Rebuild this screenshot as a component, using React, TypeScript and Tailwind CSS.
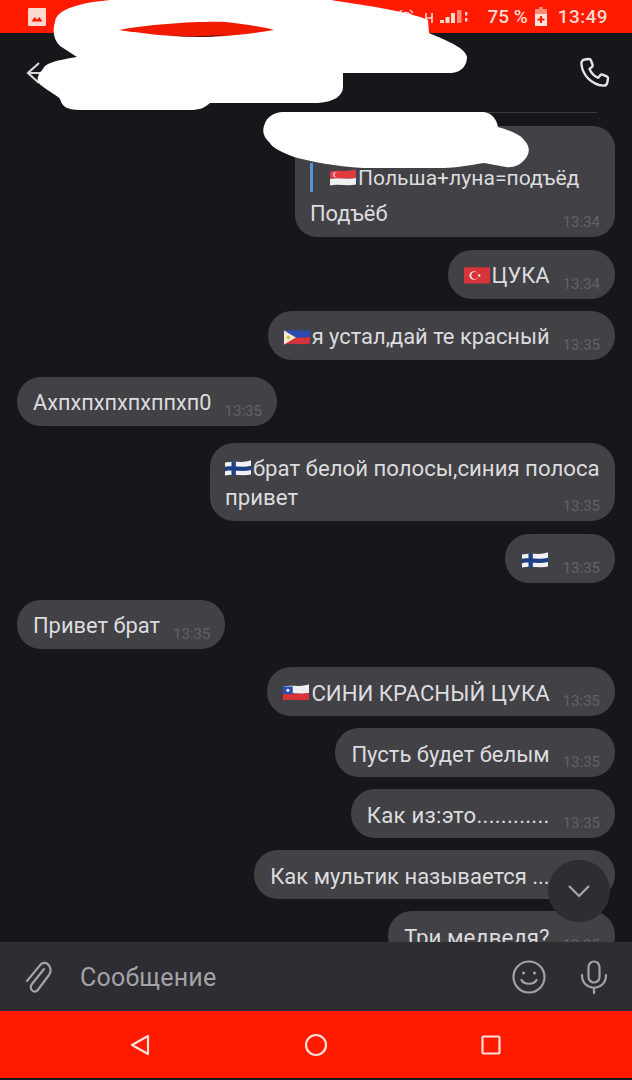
import type { ReactNode } from 'react'

type Msg = {
  text?: string
  flag?: ReactNode
  time: string
  mine?: boolean
  gap?: string
  size?: string
}

function Flag({ children }: { children: ReactNode }) {
  return (
    <svg viewBox="0 0 24 18" className="mr-[2px] inline-block h-[20px] w-[26px] shrink-0 align-[-2px]">
      {children}
    </svg>
  )
}

const Turkey = (
  <Flag>
    <rect x="0" y="1" width="24" height="15" fill="#d8333a" />
    <circle cx="9" cy="8.5" r="4" fill="#f4e3e3" />
    <circle cx="10" cy="8.5" r="3.2" fill="#d8333a" />
    <circle cx="14" cy="8.5" r="1.2" fill="#f4e3e3" />
  </Flag>
)

const Philippines = (
  <Flag>
    <path d="M0 3 C8 1 16 5 24 2 V9 C16 11 8 8 0 10 Z" fill="#2b4bb0" />
    <path d="M0 10 C8 8 16 11 24 9 V15 C16 17 8 14 0 16 Z" fill="#d8333a" />
    <path d="M0 3 L11 9.5 L0 16 Z" fill="#efe9d2" />
    <circle cx="4" cy="9.5" r="1.6" fill="#e0b93a" />
  </Flag>
)

const Finland = (
  <Flag>
    <path d="M0 3 C8 1 16 4 24 1 V14 C16 16 8 13 0 15 Z" fill="#f1f1f1" />
    <path d="M0 7 C8 5.5 16 8 24 6 V10 C16 12 8 9.5 0 11 Z" fill="#1c3f86" />
    <rect x="6" y="2" width="4" height="13" fill="#1c3f86" />
  </Flag>
)

const Chile = (
  <Flag>
    <path d="M0 3 C8 1 16 4 24 1 V9 C16 11 8 8 0 10 Z" fill="#eeeeee" />
    <path d="M0 10 C8 8 16 11 24 9 V15 C16 17 8 14 0 16 Z" fill="#d8333a" />
    <rect x="0" y="3" width="9" height="7" fill="#2b4bb0" />
    <circle cx="4.5" cy="6.5" r="1.4" fill="#ffffff" />
  </Flag>
)

const Singapore = (
  <Flag>
    <path d="M0 3 C8 1 16 4 24 1 V9 C16 11 8 8 0 10 Z" fill="#e0393e" />
    <path d="M0 10 C8 8 16 11 24 9 V15 C16 17 8 14 0 16 Z" fill="#f1f1f1" />
    <circle cx="5" cy="6" r="2.2" fill="#f1f1f1" />
    <circle cx="6" cy="6" r="2" fill="#e0393e" />
  </Flag>
)

const messages: Msg[] = [
  { flag: Turkey, text: 'ЦУКА', time: '13:34', mine: true, gap: 'mt-[13px]' },
  { flag: Philippines, text: 'я устал,дай те красный', time: '13:35', mine: true, gap: 'mt-[12px]' },
  { text: 'Ахпхпхпхпхппхп0', time: '13:35', gap: 'mt-[17px]', size: 'text-[21.7px]' },
]

const messagesAfter: Msg[] = [
  { flag: Finland, time: '13:35', mine: true, gap: 'mt-[13px]', size: 'pl-[17px] text-[21.9px]' },
  { text: 'Привет брат', time: '13:35', gap: 'mt-[17px]' },
  { flag: Chile, text: 'СИНИ КРАСНЫЙ ЦУКА', time: '13:35', mine: true, gap: 'mt-[18px]', size: 'text-[22.2px]' },
  { text: 'Пусть будет белым', time: '13:35', mine: true, gap: 'mt-[12px]', size: 'text-[22px]' },
  { text: 'Как из:это............', time: '13:35', mine: true, gap: 'mt-[12px]', size: 'text-[22.2px] tracking-[0.25px]' },
  { text: 'Как мультик называется ...', time: '13:35', mine: true, gap: 'mt-[12px]', size: 'text-[22px]' },
  { text: 'Три медведя?', time: '13:35', mine: true, gap: 'mt-[12px]', size: 'text-[22.3px]' },
]

function Time({ value }: { value: string }) {
  return <span className="ml-[13px] translate-y-[9px] text-[15px] leading-[20px] tracking-normal text-[#626268]">{value}</span>
}

function Bubble({ m }: { m: Msg }) {
  return (
    <div className={`flex ${m.mine ? 'justify-end' : 'justify-start'} ${m.gap ?? ''}`}>
      <div className={`flex h-[49px] shrink-0 items-center rounded-[24px] bg-[#414146] pl-[16px] pr-[15px] text-[#dcdcde] ${m.size ?? 'text-[21.9px]'}`}>
        <span className="flex translate-y-[2px] items-center whitespace-nowrap">
          {m.flag}
          {m.text}
        </span>
        <Time value={m.time} />
      </div>
    </div>
  )
}

function Scribble() {
  return (
    <svg viewBox="0 0 632 180" className="pointer-events-none absolute left-0 top-0 h-[180px] w-[632px]">
      <path
        d="M93 2 C70 6 56 12 55 22 C52 32 54 40 60 46 L77 57 C60 60 46 62 43 69 C36 76 36 82 42 86 C50 92 58 96 60 99 C62 106 66 110 80 110 L190 110 C200 110 204 108 210 103 L318 103 C335 102 343 95 343 87 L343 73 L452 73 C462 72 467 65 467 57 C465 48 450 42 429 33 L428 20 C410 12 370 6 331 0 L110 0 Z"
        fill="#ffffff"
      />
      <path d="M119 30 C150 24 200 21 226 22 C245 24 262 27 274 30 C250 34 220 37 197 37 C170 37 140 33 119 30 Z" fill="#f21a00" />
      <path d="M170 35 C185 37 210 37 225 34 C215 37 205 37 197 37 C188 37 178 36 170 35 Z" fill="#17161b" />
      <path
        d="M282 112 L484 112 C492 113 497 120 498 127 C508 130 520 134 524 140 C530 146 530 152 526 158 C520 166 512 168 506 167 C498 166 492 164 484 163 C470 165 455 168 444 168 L363 168 C335 166 312 162 294 157 C282 152 272 148 270 143 C264 138 262 132 264 126 C266 118 272 113 282 112 Z"
        fill="#ffffff"
      />
    </svg>
  )
}

function StatusBar() {
  return (
    <div className="flex h-[33px] shrink-0 items-center bg-[#ff1a00] pl-[28px] pr-[24px] font-['Roboto',sans-serif] text-[#ffd9d0]">
      <svg viewBox="0 0 16 16" className="h-[18px] w-[18px]">
        <rect width="16" height="16" rx="1" fill="#ffd9d0" />
        <path d="M3 12 L6 8 L8 10.5 L10 8 L13 12 Z" fill="#ff1a00" />
      </svg>
      <svg viewBox="0 0 20 20" className="ml-[13px] h-[20px] w-[20px]" fill="none" stroke="#ffd9d0" strokeWidth="2.4">
        <circle cx="10" cy="11" r="7" />
      </svg>
      <div className="ml-auto flex items-center">
        <svg viewBox="0 0 70 16" className="mr-[19px] h-[16px] w-[70px]">
          <circle cx="8" cy="9" r="5.5" fill="none" stroke="#ffd9d0" strokeWidth="1.5" />
          <path d="M1 4 L4 1 M15 4 L12 1 M8 6 V9 L10 10.5" fill="none" stroke="#ffd9d0" strokeWidth="1.4" />
          <path d="M28 4 v10 M34 4 v10 M28 9 h6" stroke="#ffd9d0" strokeWidth="1.6" fill="none" />
          <path d="M42 14 h4 v-3 h-4 Z M47.5 14 h4 v-6 h-4 Z M53 14 h4 v-10 h-4 Z" fill="#ffd9d0" />
          <path d="M59 14 h4.5 v-13 h-4.5 Z" fill="#ff8a75" />
          <path d="M67 3 h2.4 v3.5 h-2.4 Z M67 9 h2.4 v3.5 h-2.4 Z" fill="#ffd9d0" />
        </svg>
        <span className="text-[19px] font-medium leading-none">75 %</span>
        <svg viewBox="0 0 12 19" className="ml-[7px] h-[19px] w-[12px]">
          <path d="M4 0 h4 v2 h4 v5 h-12 v-5 h4 Z" fill="#ff8a75" />
          <rect y="7" width="12" height="12" fill="#ffe4dd" />
          <path d="M6 9 v7 M2.5 12.5 h7" stroke="#ff1a00" strokeWidth="2" />
        </svg>
        <span className="ml-[11px] text-[19px] font-medium leading-none tracking-[0.4px]">13:49</span>
      </div>
    </div>
  )
}

function Header() {
  return (
    <div className="flex h-[79px] shrink-0 items-center justify-between bg-[#17161b] pl-[26px] pr-[21px]">
      <svg viewBox="0 0 16 22" className="h-[22px] w-[16px]" fill="none" stroke="#d8d8d8" strokeWidth="2.2">
        <path d="M13 1 L2 11 L13 21 M2 11 H16" />
      </svg>
      <svg viewBox="0 0 24 24" className="h-[34px] w-[34px]" fill="none" stroke="#e4e4e4" strokeWidth="1.7" strokeLinejoin="round">
        <path d="M5.5 2.5 L8.3 2.1 C9 2 9.5 2.4 9.8 3 L11 6.2 C11.2 6.8 11 7.4 10.5 7.8 L8.8 9.1 C10 11.8 12.2 14.2 15 15.4 L16.4 13.6 C16.8 13.1 17.4 12.9 18 13.1 L21 14.4 C21.6 14.7 22 15.3 21.9 15.9 L21.4 18.7 C21.2 20 20 21 18.6 20.9 C10.4 20.3 3.7 13.5 3.1 5.3 C3 3.9 4.1 2.7 5.5 2.5 Z" />
      </svg>
    </div>
  )
}

function ReplyBubble() {
  return (
    <div className="flex justify-end">
      <div className="relative h-[111px] w-[320px] rounded-[22px] bg-[#414146] pl-[15px] pt-[37px] text-[21.9px] text-[#dcdcde]">
        <div className="flex h-[29px] items-center whitespace-nowrap border-l-[3px] border-[#5b8fd6] pl-[17px]">
          {Singapore}
          <span className="text-[21.1px]">Польша+луна=подъёд</span>
        </div>
        <div className="mt-[9px] leading-[26px]">Подъёб</div>
        <span className="absolute bottom-[5px] right-[15px] text-[15px] leading-[20px] text-[#626268]">13:34</span>
      </div>
    </div>
  )
}

function TwoLineBubble() {
  return (
    <div className="mt-[17px] flex justify-end">
      <div className="relative h-[78px] w-[405px] rounded-[24px] bg-[#414146] px-[15px] pt-[11px] text-[22.2px] leading-[29px] text-[#dcdcde]">
        <div className="flex items-center whitespace-nowrap">
          {Finland}
          брат белой полосы,синия полоса
        </div>
        <div>привет</div>
        <span className="absolute bottom-[5px] right-[15px] text-[15px] leading-[20px] text-[#626268]">13:35</span>
      </div>
    </div>
  )
}

function Composer() {
  return (
    <div className="flex h-[69px] shrink-0 items-center bg-[#2d2d33] pl-[24px] pr-[24px] text-[#a3a3a6]">
      <svg viewBox="0 0 30 34" className="h-[34px] w-[30px]" fill="none" stroke="#a3a3a6" strokeWidth="2.2" strokeLinecap="round">
        <path d="M20 9 L8 24 C5 28 8 33 13 31 L25 15 C29 9 24 0 17 4 L3 21" />
      </svg>
      <span className="ml-[26px] translate-y-[1px] text-[25px] tracking-[0.2px]">Сообщение</span>
      <svg viewBox="0 0 34 34" className="ml-auto h-[34px] w-[34px]" fill="none" stroke="#a3a3a6" strokeWidth="2.2" strokeLinecap="round">
        <circle cx="17" cy="17" r="15.5" />
        <circle cx="11.5" cy="13" r="1.6" fill="#a3a3a6" stroke="none" />
        <circle cx="22.5" cy="13" r="1.6" fill="#a3a3a6" stroke="none" />
        <path d="M9.5 20 C12 25 22 25 24.5 20" />
      </svg>
      <svg viewBox="0 0 28 34" className="ml-[34px] h-[34px] w-[28px]" fill="none" stroke="#a3a3a6" strokeWidth="2.2" strokeLinecap="round">
        <rect x="8.5" y="1.5" width="11" height="21" rx="5.5" />
        <path d="M2 15 C2 32 26 32 26 15 M14 28 V33" />
      </svg>
    </div>
  )
}

function NavBar() {
  return (
    <div className="flex h-[67px] shrink-0 items-center bg-[#ff1a00]">
      <div className="flex w-full items-center pl-[130px]">
        <svg viewBox="0 0 20 22" className="h-[22px] w-[20px]" fill="none" stroke="#ffe0da" strokeWidth="2.2" strokeLinejoin="round">
          <path d="M18 2 V20 L2 11 Z" />
        </svg>
        <svg viewBox="0 0 24 24" className="ml-[154px] h-[24px] w-[24px]" fill="none" stroke="#ffe0da" strokeWidth="2.2">
          <circle cx="12" cy="12" r="10" />
        </svg>
        <svg viewBox="0 0 20 20" className="ml-[153px] h-[20px] w-[20px]" fill="none" stroke="#ffe0da" strokeWidth="2.2">
          <rect x="1.5" y="1.5" width="17" height="17" rx="1" />
        </svg>
      </div>
    </div>
  )
}

export default function App() {
  return (
    <div className="relative flex h-[1080px] w-[632px] flex-col overflow-hidden bg-[#17161b] font-['Roboto',sans-serif]">
      <StatusBar />
      <Header />
      <div className="relative min-h-0 flex-1 overflow-hidden px-[17px] pt-[14px]">
        <div className="absolute right-[35px] top-0 h-[1px] w-[200px] bg-[#3a3a3f]" />
        <ReplyBubble />
        {messages.map((m, i) => (
          <Bubble key={i} m={m} />
        ))}
        <TwoLineBubble />
        {messagesAfter.map((m, i) => (
          <Bubble key={i} m={m} />
        ))}
        <button className="absolute bottom-[20px] right-[22px] flex h-[62px] w-[62px] items-center justify-center rounded-full bg-[#2d2d33]">
          <svg viewBox="0 0 24 14" className="h-[14px] w-[24px]" fill="none" stroke="#a8a8ab" strokeWidth="2.2">
            <path d="M2 2 L12 12 L22 2" />
          </svg>
        </button>
      </div>
      <Composer />
      <NavBar />
      <div className="h-[2px] shrink-0 bg-[#17161b]" />
      <Scribble />
    </div>
  )
}
